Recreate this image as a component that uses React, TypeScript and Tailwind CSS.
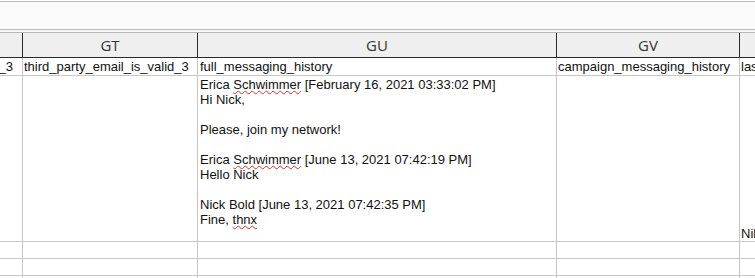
import React from "react";

const cellFont = { fontFamily: '"Liberation Sans", Arial, sans-serif' };

function Wavy({ children }: { children: React.ReactNode }) {
  return (
    <span className="underline decoration-wavy decoration-[#e0302a] decoration-1 underline-offset-[1px]">
      {children}
    </span>
  );
}

export default function App() {
  const cols = "grid-cols-[23px_175px_359px_183px_1fr]";
  return (
    <div className="w-[755px] h-[278px] overflow-hidden bg-white flex flex-col">
      <div className="h-[1px] bg-white" />
      <div className="h-[1px] bg-[#b9b9b9]" />
      <div className="h-[27px] bg-[#fafafa]" />
      <div className="h-[1px] bg-[#b9b9b9]" />
      <div className="h-[2px] bg-[#f6f6f6]" />
      <div className="h-[1px] bg-[#b9b9b9]" />
      {/* header */}
      <div
        className={`grid ${cols} h-[25px] bg-[#efefef] border-b border-[#2a2a2a] text-[15px] text-[#333]`}
        style={{ fontFamily: '"Open Sans", "Noto Sans", sans-serif' }}
      >
        <div className="border-r border-[#2a2a2a]" />
        <div className="border-r border-[#2a2a2a] flex items-center justify-center">GT</div>
        <div className="border-r border-[#2a2a2a] flex items-center justify-center">GU</div>
        <div className="border-r border-[#2a2a2a] flex items-center justify-center">GV</div>
        <div />
      </div>
      {/* row 1 */}
      <div
        className={`grid ${cols} h-[18px] border-b border-[#c6c6c6] text-[13px] leading-[17px] text-[#111]`}
        style={cellFont}
      >
        <div className="border-r border-[#c6c6c6] flex justify-end pr-[9px] overflow-hidden whitespace-nowrap">_3</div>
        <div className="border-r border-[#c6c6c6] pl-[1px] whitespace-nowrap overflow-hidden">third_party_email_is_valid_3</div>
        <div className="border-r border-[#c6c6c6] pl-[2px] whitespace-nowrap overflow-hidden">full_messaging_history</div>
        <div className="border-r border-[#c6c6c6] pl-[1px] whitespace-nowrap overflow-hidden">campaign_messaging_history</div>
        <div className="pl-[1px] whitespace-nowrap overflow-hidden">last_name</div>
      </div>
      {/* row 2 */}
      <div
        className={`grid ${cols} h-[166px] border-b border-[#c6c6c6] text-[13px] leading-[15px] text-[#111]`}
        style={cellFont}
      >
        <div className="border-r border-[#c6c6c6]" />
        <div className="border-r border-[#c6c6c6]" />
        <div className="border-r border-[#c6c6c6] pl-[2px] pt-[1px] whitespace-nowrap overflow-hidden flex flex-col">
          <div>
            Erica <Wavy>Schwimmer</Wavy> [February 16, 2021 03:33:02 PM]
          </div>
          <div>Hi Nick,</div>
          <div className="h-[15px]" />
          <div>Please, join my network!</div>
          <div className="h-[15px]" />
          <div>
            Erica <Wavy>Schwimmer</Wavy> [June 13, 2021 07:42:19 PM]
          </div>
          <div>Hello Nick</div>
          <div className="h-[15px]" />
          <div>Nick Bold [June 13, 2021 07:42:35 PM]</div>
          <div>
            Fine, <Wavy>thnx</Wavy>
          </div>
        </div>
        <div className="border-r border-[#c6c6c6]" />
        <div className="pl-[1px] flex items-end whitespace-nowrap overflow-hidden">Nikolaev</div>
      </div>
      {/* rows 3,4 */}
      {[0, 1].map((i) => (
        <div key={i} className={`grid ${cols} h-[17px] border-b border-[#c6c6c6]`}>
          <div className="border-r border-[#c6c6c6]" />
          <div className="border-r border-[#c6c6c6]" />
          <div className="border-r border-[#c6c6c6]" />
          <div className="border-r border-[#c6c6c6]" />
          <div />
        </div>
      ))}
      <div className={`grid ${cols} flex-1`}>
        <div className="border-r border-[#c6c6c6]" />
        <div className="border-r border-[#c6c6c6]" />
        <div className="border-r border-[#c6c6c6]" />
        <div className="border-r border-[#c6c6c6]" />
        <div />
      </div>
    </div>
  );
}
